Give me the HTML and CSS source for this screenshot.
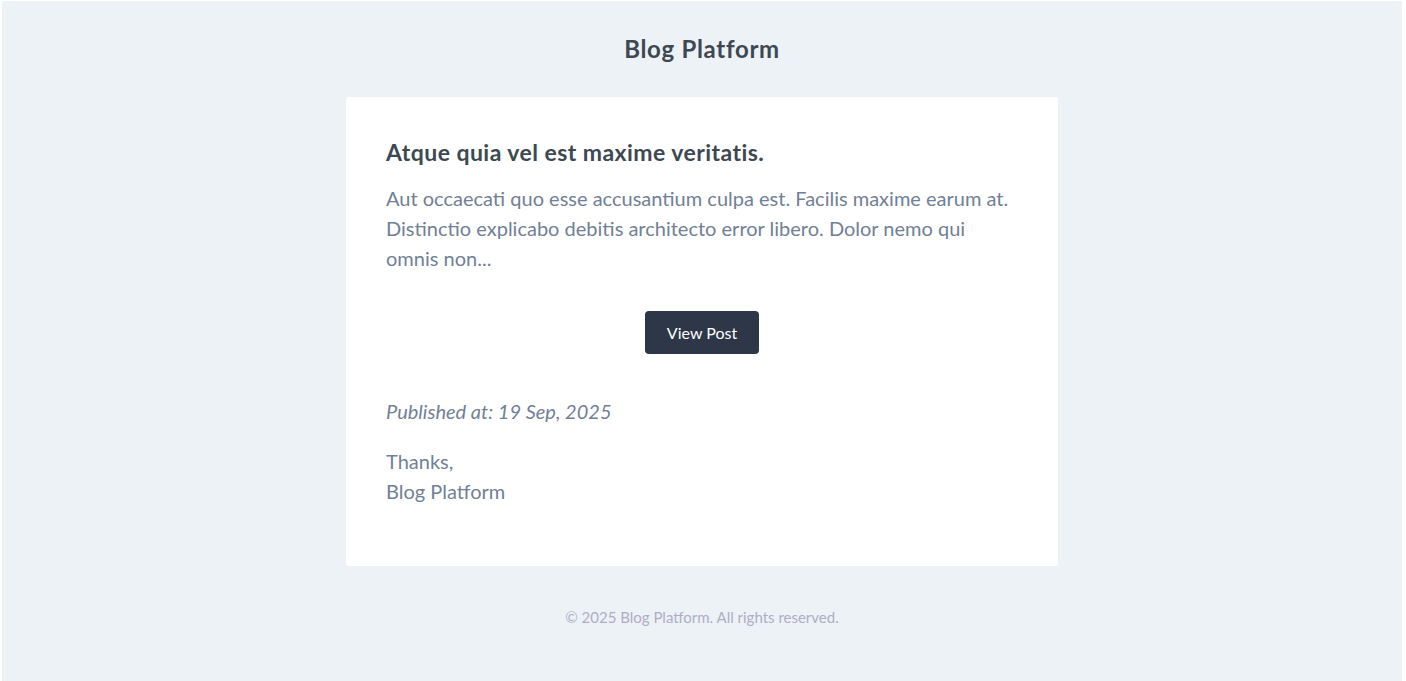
FILE: index.html
```html
<!DOCTYPE html>
<html lang="en">
<head>
<meta charset="utf-8">
<title>Blog Platform</title>
<link rel="stylesheet" href="styles.css">
</head>
<body>
<div class="frame">
  <div class="wrapper">
    <header class="header">
      <a class="brand" href="#">Blog Platform</a>
    </header>
    <main class="card">
      <h1 class="title">Atque quia vel est maxime veritatis.</h1>
      <p class="text">Aut occaecati quo esse accusantium culpa est. Facilis maxime earum at. Distinctio explicabo debitis architecto error libero. Dolor nemo qui omnis non...</p>
      <div class="action">
        <a class="button" href="#">View Post</a>
      </div>
      <p class="text published">Published at: 19 Sep, 2025</p>
      <p class="text signoff">Thanks,<br>Blog Platform</p>
    </main>
    <footer class="footer">
      <p>© 2025 Blog Platform. All rights reserved.</p>
    </footer>
  </div>
</div>
</body>
</html>
```
FILE: styles.css
```css
html, body {
  margin: 0;
  padding: 0;
  background: #ffffff;
}
body {
  font-family: "Segoe UI", Lato, "Liberation Sans", sans-serif;
}
.frame {
  padding: 1px 4px 0 2px;
  height: 681px;
  box-sizing: border-box;
}
.wrapper {
  background: #edf2f7;
  height: 100%;
  display: flex;
  flex-direction: column;
  align-items: center;
}
.header {
  height: 96px;
  display: flex;
  align-items: center;
  justify-content: center;
}
.brand {
  color: #3d4852;
  font-size: 24px;
  font-weight: 700;
  letter-spacing: 0.7px;
  text-decoration: none;
  line-height: 1;
}
.card {
  width: 712px;
  box-sizing: border-box;
  background: #ffffff;
  border-radius: 2px;
  padding: 39px 40px 40px;
}
.title {
  margin: 0 0 14px;
  color: #3d4852;
  font-size: 23px;
  font-weight: 700;
  letter-spacing: 0.45px;
  line-height: 33px;
}
.text {
  margin: 0;
  color: #718096;
  font-size: 20px;
  line-height: 30px;
}
.action {
  display: flex;
  justify-content: center;
  margin: 38px 0 42px;
}
.button {
  display: inline-flex;
  align-items: center;
  justify-content: center;
  width: 114px;
  height: 43px;
  background: #2d3748;
  border-radius: 4px;
  color: #ffffff;
  font-size: 16px;
  text-decoration: none;
}
.published {
  font-style: italic;
  margin-bottom: 20px;
}
.signoff {
  margin-bottom: 20px;
}
.footer {
  padding-top: 39px;
}
.footer p {
  margin: 0;
  color: #b0adc5;
  font-size: 15px;
  line-height: 24px;
  text-align: center;
}
```
